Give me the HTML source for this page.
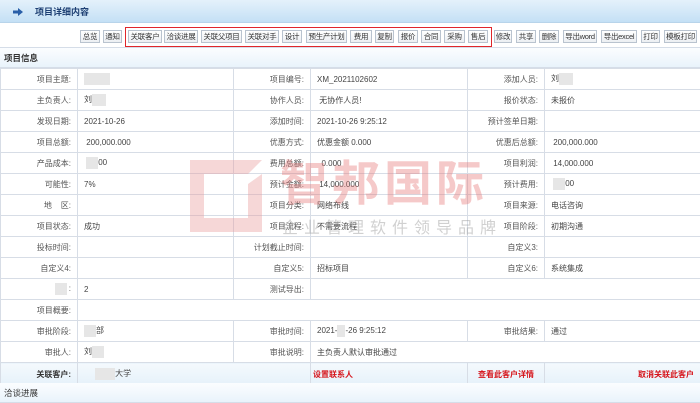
<!DOCTYPE html>
<html><head><meta charset="utf-8"><style>
*{margin:0;padding:0;box-sizing:border-box}
body{width:700px;height:403px;overflow:hidden;background:#fff;font-family:"Liberation Sans","Noto Sans CJK SC",sans-serif;font-size:8px;color:#444;position:relative}
.hdr{position:absolute;left:0;top:0;width:700px;height:23px;background:linear-gradient(#e4f1fb,#c4e0f5);border-bottom:1px solid #b8d4ea}
.hdr .t{position:absolute;left:35px;top:5px;font-weight:bold;color:#1d3f73;font-size:9px}
.tb{position:absolute;left:0;top:23px;width:700px;height:25px;background:#fff;border-bottom:1px solid #d5dde8}
.b{position:absolute;top:7px;height:13px;border:1px solid #b9c3cf;background:linear-gradient(#fff,#eceff3);font-size:7.5px;line-height:11px;text-align:center;color:#333;white-space:nowrap;overflow:hidden;letter-spacing:-0.3px}
.red{position:absolute;left:125px;top:27px;width:367px;height:20px;border:1.5px solid #e0262b}
.sec{position:absolute;left:0;width:700px;background:linear-gradient(#fbfdff,#e9f3fb);border-bottom:1px solid #d5dde8;font-weight:bold;color:#333;padding-left:4px;font-size:8.5px}
table{position:absolute;left:0;top:68px;width:700px;border-collapse:collapse;table-layout:fixed}
td{border:1px solid #d7dde6;height:21px;padding:0 6px;white-space:nowrap;overflow:hidden;font-size:8px}
td.l{text-align:right;color:#555}
tr.k td{height:23px;background:linear-gradient(#f4f9fd,#e5f1fa)}
.r{color:#d6141b;font-weight:bold}
.bl{display:inline-block;background:#e6e6e6;vertical-align:middle;height:12px}
.wm{position:absolute;left:0;top:0;pointer-events:none}
</style></head><body>
<div class="hdr"><svg style="position:absolute;left:13px;top:8px" width="10" height="8"><path d="M0 2.5h5V0l5 4-5 4V5.5H0z" fill="#2a5fa8"/></svg><span class="t">项目详细内容</span></div>
<div class="tb">
<div class="b" style="left:80px;width:20px">总览</div>
<div class="b" style="left:103px;width:19px">通知</div>
<div class="b" style="left:128px;width:34px">关联客户</div>
<div class="b" style="left:164px;width:34px">洽谈进展</div>
<div class="b" style="left:201px;width:41px">关联父项目</div>
<div class="b" style="left:245px;width:34px">关联对手</div>
<div class="b" style="left:282px;width:20px">设计</div>
<div class="b" style="left:306px;width:41px">预生产计划</div>
<div class="b" style="left:350px;width:22px">费用</div>
<div class="b" style="left:375px;width:19px">复制</div>
<div class="b" style="left:398px;width:20px">报价</div>
<div class="b" style="left:421px;width:20px">合同</div>
<div class="b" style="left:444px;width:21px">采购</div>
<div class="b" style="left:468px;width:20px">售后</div>
<div class="b" style="left:494px;width:18px">修改</div>
<div class="b" style="left:516px;width:20px">共享</div>
<div class="b" style="left:539px;width:20px">删除</div>
<div class="b" style="left:563px;width:34px">导出word</div>
<div class="b" style="left:601px;width:36px">导出excel</div>
<div class="b" style="left:641px;width:19px">打印</div>
<div class="b" style="left:664px;width:33px">模板打印</div>
</div>
<div class="red"></div>
<div class="sec" style="top:48px;height:20px;line-height:20px">项目信息</div>
<table>
<colgroup><col style="width:77px"><col style="width:156px"><col style="width:77px"><col style="width:157px"><col style="width:77px"><col style="width:156px"></colgroup>
<tr><td class="l">项目主题:</td><td><span class="bl" style="width:26px"></span></td><td class="l">项目编号:</td><td>XM_2021102602</td><td class="l">添加人员:</td><td>刘<span class="bl" style="width:14px"></span></td></tr>
<tr><td class="l">主负责人:</td><td>刘<span class="bl" style="width:14px"></span></td><td class="l">协作人员:</td><td>&nbsp;无协作人员!</td><td class="l">报价状态:</td><td>未报价</td></tr>
<tr><td class="l">发现日期:</td><td>2021-10-26</td><td class="l">添加时间:</td><td>2021-10-26 9:25:12</td><td class="l">预计签单日期:</td><td></td></tr>
<tr><td class="l">项目总额:</td><td>&nbsp;200,000.000</td><td class="l">优惠方式:</td><td>优惠金额 0.000</td><td class="l">优惠后总额:</td><td>&nbsp;200,000.000</td></tr>
<tr><td class="l">产品成本:</td><td>&nbsp;<span class="bl" style="width:12px"></span>00</td><td class="l">费用总额:</td><td>&nbsp;&nbsp;0.000</td><td class="l">项目利润:</td><td>&nbsp;14,000.000</td></tr>
<tr><td class="l">可能性:</td><td>7%</td><td class="l">预计金额:</td><td>&nbsp;14,000.000</td><td class="l">预计费用:</td><td>&nbsp;<span class="bl" style="width:12px"></span>00</td></tr>
<tr><td class="l">地&nbsp;&nbsp;&nbsp;&nbsp;区:</td><td></td><td class="l">项目分类:</td><td>网络布线</td><td class="l">项目来源:</td><td>电话咨询</td></tr>
<tr><td class="l">项目状态:</td><td>成功</td><td class="l">项目流程:</td><td>不需要流程</td><td class="l">项目阶段:</td><td>初期沟通</td></tr>
<tr><td class="l">投标时间:</td><td></td><td class="l">计划截止时间:</td><td></td><td class="l">自定义3:</td><td></td></tr>
<tr><td class="l">自定义4:</td><td></td><td class="l">自定义5:</td><td>招标项目</td><td class="l">自定义6:</td><td>系统集成</td></tr>
<tr><td class="l"><span class="bl" style="width:12px"></span>&nbsp;:</td><td>2</td><td class="l">测试导出:</td><td colspan="3"></td></tr>
<tr><td class="l">项目概要:</td><td colspan="5"></td></tr>
<tr><td class="l">审批阶段:</td><td><span class="bl" style="width:12px"></span>部</td><td class="l">审批时间:</td><td>2021-<span class="bl" style="width:8px"></span>-26 9:25:12</td><td class="l">审批结果:</td><td>通过</td></tr>
<tr><td class="l">审批人:</td><td>刘<span class="bl" style="width:12px"></span></td><td class="l">审批说明:</td><td colspan="3">主负责人默认审批通过</td></tr>
<tr class="k"><td class="l" style="color:#333;font-weight:bold">关联客户:</td><td colspan="2">&nbsp;&nbsp;&nbsp;&nbsp;&nbsp;<span class="bl" style="width:20px"></span>大学</td><td class="r" style="padding-left:2px">设置联系人</td><td class="r" style="text-align:center">查看此客户详情</td><td class="r" style="text-align:right">取消关联此客户</td></tr>
</table>
<div class="sec" style="top:383px;height:20px;line-height:20px;font-weight:normal">洽谈进展</div>
<svg class="wm" width="700" height="403">
<path d="M190 160h72l-14 14h-44v44h44v-34l14-10v58h-72z" fill="#e89a9a" opacity="0.4"/>
<text x="280" y="200" font-family="Noto Sans CJK SC" font-size="48" font-weight="bold" fill="#e57373" opacity="0.38" letter-spacing="4">智邦国际</text>
<text x="282" y="233" font-family="Noto Sans CJK SC" font-size="16" fill="#999" opacity="0.45" letter-spacing="6">企业管理软件领导品牌</text>
</svg>
</body></html>
